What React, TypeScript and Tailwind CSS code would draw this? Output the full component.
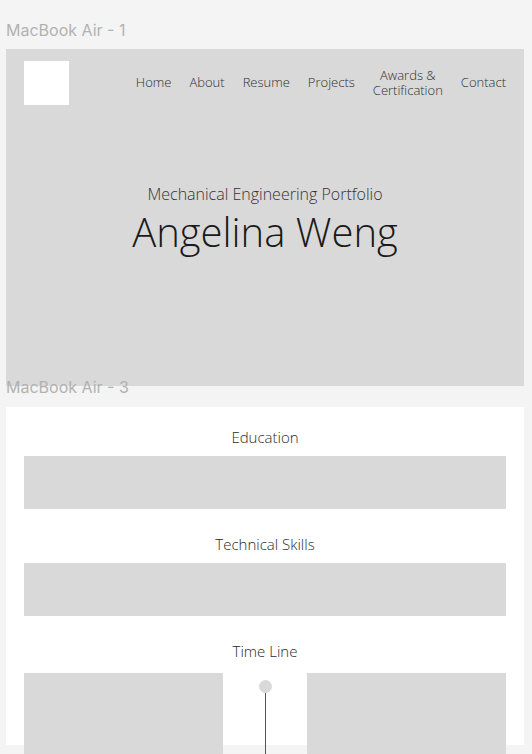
import React from 'react'

const navItems = ['Home', 'About', 'Resume', 'Projects']

function FrameLabel({ children, className = '' }: { children: React.ReactNode; className?: string }) {
    return (
        <p className={`px-[6px] text-[16px] leading-[16px] text-[#b2b2b2] font-['Inter',sans-serif] ${className}`}>{children}</p>
    )
}

function Heading({ children }: { children: React.ReactNode }) {
    return <h2 className="text-center text-[15px] leading-[18px] text-[#2a2a2a] font-light">{children}</h2>
}

export default function App() {
    return (
        <div className="w-[532px] h-[754px] overflow-hidden bg-[#f4f4f4] font-['Open_Sans',sans-serif]">
            <FrameLabel className="pt-[22px]">MacBook Air - 1</FrameLabel>
            <div className="ml-[6px] w-[518px] mt-[11px] h-[337px] bg-[#d9d9d9] flex flex-col">
                <div className="flex items-start pl-[18px] pr-[18px] pt-[12px]">
                    <div className="w-[45px] h-[44px] bg-white" />
                    <nav className="ml-auto flex items-center gap-[18px] h-[44px] text-[13px] text-[#2f2f2f] font-light">
                        {navItems.map((n) => (
                            <span key={n}>{n}</span>
                        ))}
                        <span className="text-center leading-[15px]">Awards &amp;<br />Certification</span>
                        <span>Contact</span>
                    </nav>
                </div>
                <div className="mt-[80px] flex flex-col items-center">
                    <p className="text-[16px] leading-[19px] text-[#333] font-light">Mechanical Engineering Portfolio</p>
                    <h1 className="mt-[5px] text-[40px] leading-[46px] text-[#1a1a1a] font-light">Angelina Weng</h1>
                </div>
            </div>
            <FrameLabel className="relative -mt-[7px]">MacBook Air - 3</FrameLabel>
            <div className="ml-[6px] w-[518px] mt-[12px] h-[338px] bg-white flex flex-col pt-[21px]">
                <Heading>Education</Heading>
                <div className="shrink-0 mx-[18px] mt-[10px] h-[53px] bg-[#d9d9d9]" />
                <div className="mt-[26px]">
                    <Heading>Technical Skills</Heading>
                </div>
                <div className="shrink-0 mx-[18px] mt-[10px] h-[53px] bg-[#d9d9d9]" />
                <div className="mt-[26px]">
                    <Heading>Time Line</Heading>
                </div>
                <div className="mt-[13px] flex px-[18px] flex-1">
                    <div className="w-[199px] bg-[#d9d9d9]" />
                    <div className="flex-1 flex flex-col items-center pt-[7px]">
                        <div className="shrink-0 w-[13px] h-[13px] rounded-full bg-[#d9d9d9]" />
                        <div className="shrink-0 w-px h-[70px] bg-[#555]" />
                    </div>
                    <div className="w-[199px] bg-[#d9d9d9]" />
                </div>
            </div>
        </div>
    )
}
